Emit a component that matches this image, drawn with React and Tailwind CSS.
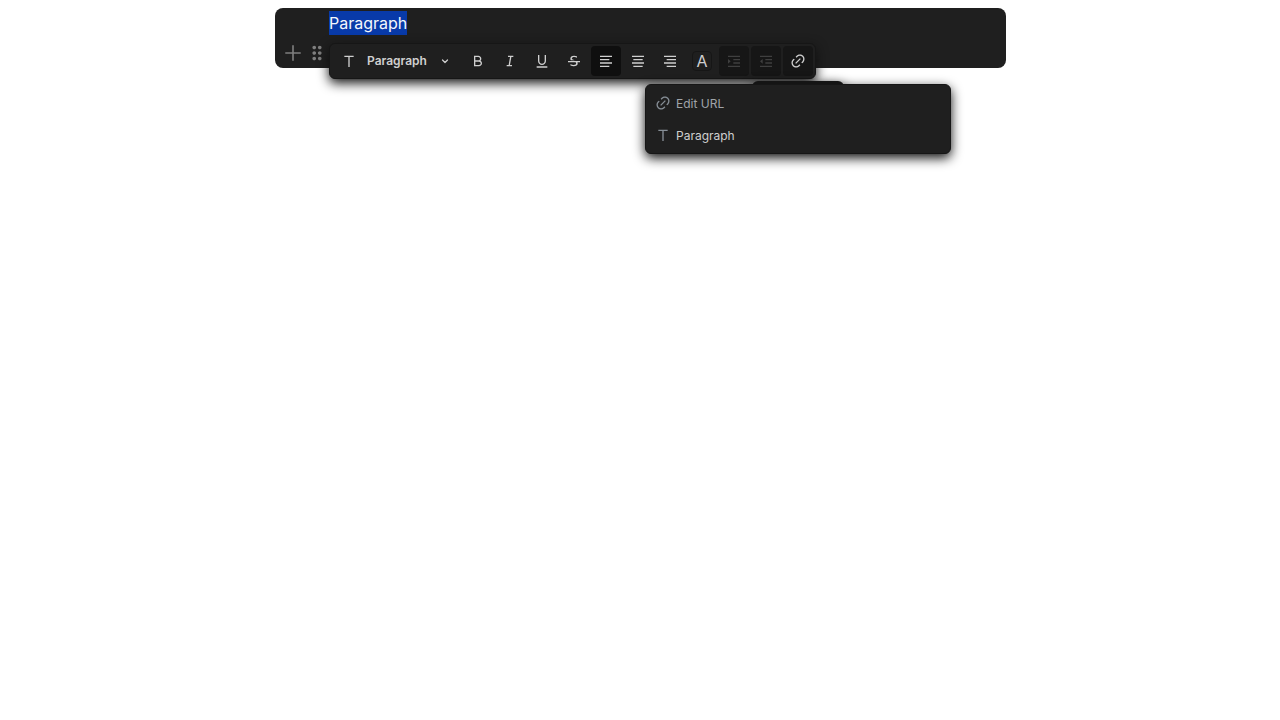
import React from "react";
import {
  RiAlignCenter,
  RiAlignLeft,
  RiAlignRight,
  RiBold,
  RiIndentDecrease,
  RiIndentIncrease,
  RiItalic,
  RiLink,
  RiStrikethrough,
  RiText,
  RiUnderline,
} from "react-icons/ri";
import { AiOutlinePlus } from "react-icons/ai";
import { MdDragIndicator } from "react-icons/md";

const buttonBase = "flex size-[30px] shrink-0 items-center justify-center rounded-[4px]";

function ToolButton({ label, icon: Icon, active = false, disabled = false }) {
  const tone = disabled
    ? "bg-[#161616] text-[#3f3f3f]"
    : active
      ? "bg-[#0f0f0f] text-[#cfcfcf]"
      : "text-[#cfcfcf]";
  return (
    <button type="button" aria-label={label} aria-pressed={active} disabled={disabled} className={`${buttonBase} ${tone}`}>
      <Icon className="size-4" />
    </button>
  );
}

function Chevron() {
  return (
    <svg viewBox="0 0 24 24" className="size-3" fill="none" stroke="currentColor" strokeWidth="2.5" strokeLinecap="round" strokeLinejoin="round" aria-hidden="true">
      <path d="M7 10l5 5l5 -5" />
    </svg>
  );
}

function LinkForm() {
  return (
    <form className="absolute top-[38px] -left-[138px] w-[306px] rounded-[6px] border border-[#161616] bg-[#1f1f1f] p-[2px] text-[12px] shadow-[0_4px_12px_#0f0f0f]">
      <label className="flex h-8 items-center gap-[5px] pl-[7px] text-[#868e96]">
        <RiLink className="size-4 shrink-0" />
        <input
          type="text"
          aria-label="Edit URL"
          placeholder="Edit URL"
          className="h-8 min-w-0 flex-1 bg-transparent text-[#cfcfcf] outline-none placeholder:text-[#a0a4a9]"
        />
      </label>
      <label className="flex h-8 items-center gap-[5px] pl-[7px] text-[#868e96]">
        <RiText className="size-4 shrink-0" />
        <input
          type="text"
          aria-label="Edit title"
          defaultValue="Paragraph"
          className="h-8 min-w-0 flex-1 bg-transparent text-[#cfcfcf] outline-none"
        />
      </label>
    </form>
  );
}

function FormattingToolbar() {
  return (
    <div
      role="toolbar"
      aria-label="Formatting"
      className="absolute top-[35px] left-[54px] flex gap-[2px] rounded-[6px] border border-[#161616] bg-[#1f1f1f] p-[2px] shadow-[0_4px_12px_#0f0f0f]"
    >
      <button type="button" className="flex h-[30px] w-[129px] items-center pl-[9px] text-[12px] font-semibold text-[#cfcfcf]">
        <RiText className="size-4" />
        <span className="ml-[10px]">Paragraph</span>
        <span className="ml-3">
          <Chevron />
        </span>
      </button>
      <ToolButton label="Bold" icon={RiBold} />
      <ToolButton label="Italic" icon={RiItalic} />
      <ToolButton label="Underline" icon={RiUnderline} />
      <ToolButton label="Strike" icon={RiStrikethrough} />
      <ToolButton label="Align left" icon={RiAlignLeft} active />
      <ToolButton label="Align center" icon={RiAlignCenter} />
      <ToolButton label="Align right" icon={RiAlignRight} />
      <button type="button" aria-label="Colors" className={buttonBase}>
        <span className="flex size-5 items-center justify-center rounded-[4px] border border-[#161616] text-[16px] leading-5 text-[#cfcfcf]">
          A
        </span>
      </button>
      <ToolButton label="Nest block" icon={RiIndentIncrease} disabled />
      <ToolButton label="Unnest block" icon={RiIndentDecrease} disabled />
      <div className="relative">
        <button type="button" aria-label="Create link" aria-expanded="true" className={`${buttonBase} bg-[#161616] text-[#cfcfcf]`}>
          <RiLink className="size-4" />
        </button>
        <div aria-hidden="true" className="absolute top-[35px] -left-[31px] h-10 w-[92px] rounded-[6px] bg-[#161616] shadow-[0_4px_12px_#0f0f0f]" />
        <LinkForm />
      </div>
    </div>
  );
}

export default function App() {
  return (
    <main className="min-h-screen py-2 pr-2 pl-[9px] font-['Inter',sans-serif]">
      <div className="relative mx-auto max-w-[731px] rounded-[8px] bg-[#1f1f1f] text-[16px] leading-6 text-[#cfcfcf]">
        <p className="px-[54px] py-[3px]">
          <span className="inline-block bg-[#083aa9] text-[#f4f7fc]">Paragraph</span>
        </p>
        <div className="flex h-[30px] items-center pl-[6px] text-[#7f7f7f]">
          <button type="button" aria-label="Add block" className="flex size-6 items-center justify-center">
            <AiOutlinePlus className="size-[22px]" />
          </button>
          <button type="button" aria-label="Open block menu" className="flex size-6 items-center justify-center">
            <MdDragIndicator className="size-[22px]" />
          </button>
        </div>
        <FormattingToolbar />
      </div>
    </main>
  );
}
